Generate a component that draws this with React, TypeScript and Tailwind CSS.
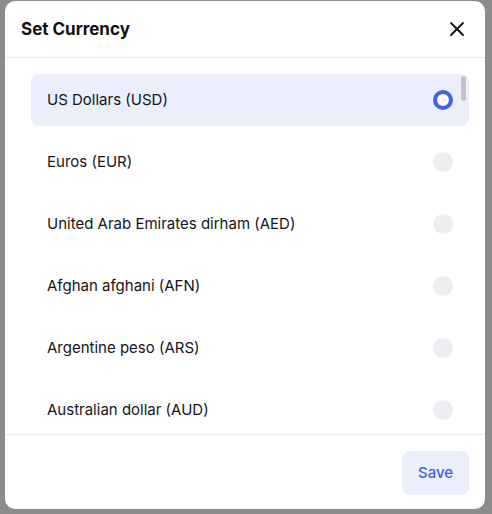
import { X } from 'lucide-react';

const currencies = [
  'US Dollars (USD)',
  'Euros (EUR)',
  'United Arab Emirates dirham (AED)',
  'Afghan afghani (AFN)',
  'Argentine peso (ARS)',
  'Australian dollar (AUD)',
];

export default function App() {
  const selected = 0;

  return (
    <div className="w-[492px] h-[514px] bg-[#8c8c8c] pt-px pl-[5px] font-['Inter',sans-serif]">
      <div className="w-[480px] h-[508px] bg-white rounded-[10px] flex flex-col overflow-hidden">
        {/* Header */}
        <div className="h-[57px] shrink-0 border-b border-[#ececef] pl-4 pr-4 flex items-center justify-between">
          <h2 className="text-[17px] font-bold text-[#111111] mt-px">Set Currency</h2>
          <X size={24} strokeWidth={1.8} className="text-[#111111]" />
        </div>

        {/* List */}
        <div className="relative flex-1 overflow-hidden pl-[26px] pr-4 pt-[16px]">
          <div className="flex flex-col gap-[10px]">
            {currencies.map((name, i) => (
              <div
                key={name}
                className={
                  i === selected
                    ? 'h-[52px] shrink-0 rounded-lg bg-[#ebeefb] px-4 flex items-center justify-between'
                    : 'h-[52px] shrink-0 rounded-lg px-4 flex items-center justify-between'
                }
              >
                <span className="text-[15px] text-[#151517]">{name}</span>
                {i === selected ? (
                  <span className="w-5 h-5 rounded-full border-[4px] border-[#4361e6] bg-white" />
                ) : (
                  <span className="w-5 h-5 rounded-full bg-[#eceef2]" />
                )}
              </div>
            ))}
          </div>
          <div className="absolute right-[19px] top-[18px] w-[5px] h-[25px] rounded-full bg-[#c4c4c4]" />
        </div>

        {/* Footer */}
        <div className="h-[75px] shrink-0 border-t border-[#ececef] px-4 pt-4 flex justify-end">
          <button className="h-[44px] w-[67px] rounded-lg bg-[#ebeefb] text-[15px] font-medium text-[#4a5fd8]">
            Save
          </button>
        </div>
      </div>
    </div>
  );
}
